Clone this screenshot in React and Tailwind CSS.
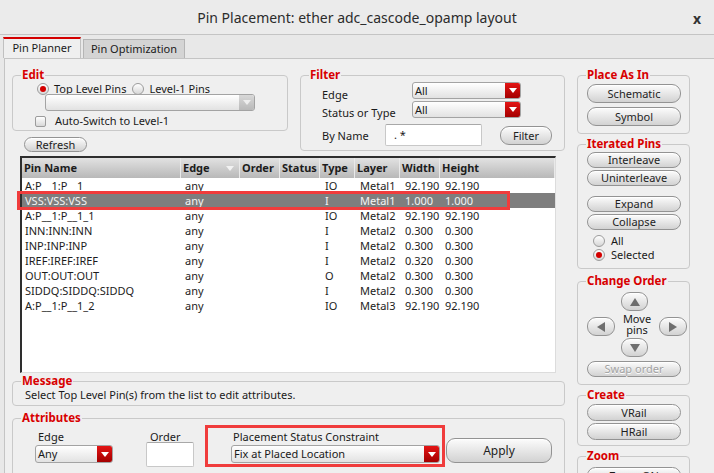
import React from 'react'

const rows = [
  { name: 'A:P__1:P__1', edge: 'any', type: 'IO', layer: 'Metal1', w: '92.190', h: '92.190' },
  { name: 'VSS:VSS:VSS', edge: 'any', type: 'I', layer: 'Metal1', w: '1.000', h: '1.000', sel: true },
  { name: 'A:P__1:P__1_1', edge: 'any', type: 'IO', layer: 'Metal2', w: '92.190', h: '92.190' },
  { name: 'INN:INN:INN', edge: 'any', type: 'I', layer: 'Metal2', w: '0.300', h: '0.300' },
  { name: 'INP:INP:INP', edge: 'any', type: 'I', layer: 'Metal2', w: '0.300', h: '0.300' },
  { name: 'IREF:IREF:IREF', edge: 'any', type: 'I', layer: 'Metal2', w: '0.320', h: '0.300' },
  { name: 'OUT:OUT:OUT', edge: 'any', type: 'O', layer: 'Metal2', w: '0.300', h: '0.300' },
  { name: 'SIDDQ:SIDDQ:SIDDQ', edge: 'any', type: 'I', layer: 'Metal2', w: '0.300', h: '0.300' },
  { name: 'A:P__1:P__1_2', edge: 'any', type: 'IO', layer: 'Metal3', w: '92.190', h: '92.190' },
]

const cols = 'grid grid-cols-[159px_59px_40px_40px_35px_45px_40px_1fr]'

const Group = ({ title, className = '', children }) => (
  <fieldset className={`block shrink-0 border border-[#c9c9c9] rounded-[4px] ${className}`}>
    <legend className="ml-[8px] px-[1px] text-[11.5px] leading-[14px] font-bold text-[#d80000]">{title}</legend>
    {children}
  </fieldset>
)

const Btn = ({ className = '', disabled, children }) => (
  <div
    className={`flex shrink-0 items-center justify-center rounded-[9px] border border-[#939393] bg-linear-to-b from-[#fcfcfc] to-[#d2d2d2] shadow-[inset_0_1px_0_#ffffff] text-[11px] leading-[14px] ${
      disabled ? 'text-[#a2a2a2] [text-shadow:0_1px_0_#ffffff]' : 'text-[#1e1e1e]'
    } ${className}`}
  >
    {children}
  </div>
)

const Radio = ({ checked }) => (
  <span className="w-[12px] h-[12px] rounded-full border border-[#9c9c9c] bg-linear-to-b from-[#ffffff] to-[#d6d6d6] flex items-center justify-center shrink-0">
    {checked && <span className="w-[6px] h-[6px] rounded-full bg-[#d40000]" />}
  </span>
)

const Arrow = ({ color = '#ffffff' }) => (
  <svg width="8" height="5" viewBox="0 0 8 5">
    <polygon points="0,0 8,0 4,5" fill={color} />
  </svg>
)

const Combo = ({ text, className = '', gray }) => (
  <div className={`flex rounded-[3px] border border-[#a3a3a3] bg-linear-to-b from-[#ffffff] to-[#e2e2e2] overflow-hidden ${className}`}>
    <div className="flex-1 flex items-center pl-[2px] text-[11px] leading-[14px] text-[#1a1a1a]">{text}</div>
    <div
      className={`w-[15px] flex items-center justify-center ${
        gray ? 'bg-linear-to-b from-[#d8d8d8] to-[#b9b9b9]' : 'bg-linear-to-b from-[#e41414] to-[#a40000]'
      }`}
    >
      <Arrow color={gray ? '#eeeeee' : '#ffffff'} />
    </div>
  </div>
)

const Tri = ({ dir }) => {
  const pts = { up: '0,8 10,8 5,0', down: '0,0 10,0 5,8', left: '8,0 8,10 0,5', right: '0,0 0,10 8,5' }[dir]
  const vertical = dir === 'up' || dir === 'down'
  return (
    <svg width={vertical ? 10 : 8} height={vertical ? 8 : 10} viewBox={vertical ? '0 0 10 8' : '0 0 8 10'}>
      <polygon points={pts} fill="#6e6e6e" />
    </svg>
  )
}

export default function App() {
  return (
    <div className="w-[714px] h-[473px] overflow-hidden bg-[#e8e8e8] font-['Noto_Sans',sans-serif] text-[11px] text-[#1a1a1a]">
      {/* title bar */}
      <div className="relative h-[35px] flex items-center justify-center border-b border-[#c4c4c4] bg-[#ebebeb]">
        <span className="text-[14px] text-[#2c2c2c]">Pin Placement: ether adc_cascode_opamp layout</span>
        <span className="absolute right-[13px] top-[8px] text-[14px] font-bold text-[#333]">x</span>
      </div>

      {/* tabs */}
      <div className="h-[23px] flex items-end pl-[3px] gap-[2px]">
        <div className="w-[78px] h-[21px] bg-[#efefef] border border-[#c0c0c0] border-b-0 border-t-2 border-t-[#d40000] flex items-center justify-center text-[11px]">
          Pin Planner
        </div>
        <div className="w-[102px] h-[19px] bg-[#d4d4d4] border border-[#b5b5b5] border-b-0 flex items-center justify-center text-[11px]">
          Pin Optimization
        </div>
      </div>

      {/* content */}
      <div className="ml-[4px] h-[415px] overflow-hidden border-l border-t border-[#c4c4c4] bg-[#efefef] flex items-start pl-[7px] pt-[9px] gap-[12px]">
        {/* left column */}
        <div className="w-[553px] shrink-0">
          <div className="flex items-start gap-[12px]">
            <div className="w-[276px] shrink-0">
              <Group title="Edit" className="h-[63px]">
                <div className="flex items-center h-[14px] pl-[24px]">
                  <Radio checked />
                  <span className="ml-[5px]">Top Level Pins</span>
                  <span className="ml-[6px]"><Radio /></span>
                  <span className="ml-[5px]">Level-1 Pins</span>
                </div>
                <Combo text="" gray className="relative ml-[32px] mt-[-2px] w-[210px] h-[17px]" />
                <div className="flex items-center h-[16px] mt-[2px] pl-[22px]">
                  <span className="w-[11px] h-[11px] border border-[#9c9c9c] rounded-[2px] bg-linear-to-b from-[#ffffff] to-[#d8d8d8]" />
                  <span className="ml-[9px]">Auto-Switch to Level-1</span>
                </div>
              </Group>
              <Btn className="ml-[12px] mt-[6px] w-[63px] h-[15px]">Refresh</Btn>
            </div>

            <Group title="Filter" className="w-[265px] h-[83px]">
              <div className="flex items-start h-[17px]">
                <span className="w-[111px] pl-[21px] pt-[6px] leading-[14px]">Edge</span>
                <Combo text="All" className="w-[109px] h-[17px]" />
              </div>
              <div className="flex items-start h-[17px] mt-[2px]">
                <span className="w-[111px] pl-[21px] pt-[5px] leading-[14px]">Status or Type</span>
                <Combo text="All" className="w-[109px] h-[17px]" />
              </div>
              <div className="flex items-start h-[22px] mt-[6px]">
                <span className="w-[84px] pl-[21px] pt-[5px] leading-[14px]">By Name</span>
                <div className="w-[97px] h-[22px] bg-white border border-[#c8c8c8] border-t-[#a8a8a8] rounded-[2px] pl-[8px] pt-[3px] leading-[14px]">. *</div>
                <Btn className="ml-[18px] mt-[2px] w-[52px] h-[19px]">Filter</Btn>
              </div>
            </Group>
          </div>

          {/* table */}
          <div className="relative ml-[8px] mt-[4px] w-[536px] h-[217px] bg-white border-t-2 border-l-2 border-[#2e2e2e] border-r border-b border-r-[#dcdcdc] border-b-[#dcdcdc]">
            <div className={`${cols} h-[20px] bg-linear-to-b from-[#e2e2e2] to-[#b8b8b8] font-bold`}>
              {['Pin Name', 'Edge', 'Order', 'Status', 'Type', 'Layer', 'Width', 'Height'].map((h) => (
                <div key={h} className="flex items-center pl-[2px] border-r border-[#e9e9e9] text-[#1c1c1c]">
                  {h}
                  {h === 'Edge' && (
                    <span className="ml-auto mr-[5px]">
                      <Arrow color="#f2f2f2" />
                    </span>
                  )}
                </div>
              ))}
            </div>
            {rows.map((r) => (
              <div
                key={r.name}
                className={`${cols} h-[15px] leading-[15px] ${r.sel ? 'bg-[#7e7e7e] text-[#f4f4f4]' : 'text-[#1c1c1c]'}`}
              >
                <div className="pl-[3px]">{r.name}</div>
                <div className="pl-[4px]">{r.edge}</div>
                <div />
                <div />
                <div className="pl-[5px]">{r.type}</div>
                <div className="pl-[5px]">{r.layer}</div>
                <div className="pl-[5px]">{r.w}</div>
                <div className="pl-[5px]">{r.h}</div>
              </div>
            ))}
            <div className="absolute left-[-5px] top-[33px] w-[493px] h-[19px] border-[3px] border-[#f03c3c]" />
          </div>

          <Group title="Message" className="mt-[1px] h-[32px]">
            <div className="pl-[12px] leading-[14px]">Select Top Level Pin(s) from the list to edit attributes.</div>
          </Group>

          <Group title="Attributes" className="mt-[5px] h-[70px]">
            <div className="flex items-start">
              <div className="ml-[22px] w-[78px] flex flex-col">
                <span className="pl-[3px] mt-[5px] leading-[14px]">Edge</span>
                <Combo text="Any" className="mt-[1px] h-[18px]" />
              </div>
              <div className="ml-[33px] w-[48px] flex flex-col">
                <span className="pl-[4px] mt-[5px] leading-[14px]">Order</span>
                <div className="mt-[-2px] h-[25px] bg-white border border-[#c8c8c8] border-t-[#a8a8a8] rounded-[2px]" />
              </div>
              <div className="ml-[11px] w-[240px] h-[42px] border-[3px] border-[#f03c3c] pl-[23px] pt-[2px] flex flex-col">
                <span className="pl-[2px] leading-[14px]">Placement Status Constraint</span>
                <Combo text="Fix at Placed Location" className="mt-[1px] w-[209px] h-[18px]" />
              </div>
              <Btn className="ml-[1px] mt-[13px] w-[106px] h-[25px] text-[12px]">Apply</Btn>
            </div>
          </Group>
        </div>

        {/* right column */}
        <div className="w-[113px] shrink-0">
          <Group title="Place As In" className="h-[66px]">
            <Btn className="ml-[9px] mt-[2px] w-[94px] h-[19px]">Schematic</Btn>
            <Btn className="ml-[9px] mt-[4px] w-[94px] h-[19px]">Symbol</Btn>
          </Group>

          <Group title="Iterated Pins" className="mt-[3px] h-[132px]">
            <Btn className="ml-[9px] mt-[1px] w-[94px] h-[16px]">Interleave</Btn>
            <Btn className="ml-[9px] mt-[2px] w-[94px] h-[16px]">Uninterleave</Btn>
            <Btn className="ml-[9px] mt-[10px] w-[94px] h-[16px]">Expand</Btn>
            <Btn className="ml-[9px] mt-[2px] w-[94px] h-[16px]">Collapse</Btn>
            <div className="flex items-center ml-[15px] mt-[4px] h-[14px]">
              <Radio />
              <span className="ml-[6px]">All</span>
            </div>
            <div className="flex items-center ml-[15px] h-[14px]">
              <Radio checked />
              <span className="ml-[6px]">Selected</span>
            </div>
          </Group>

          <Group title="Change Order" className="mt-[5px] h-[111px]">
            <div className="flex justify-center mt-[4px] pl-[2px]">
              <Btn className="w-[27px] h-[19px]"><Tri dir="up" /></Btn>
            </div>
            <div className="flex items-start h-[27px]">
              <Btn className="ml-[9px] mt-[6px] w-[28px] h-[19px]"><Tri dir="left" /></Btn>
              <div className="flex-1 flex flex-col items-center leading-[11px] mt-[2px]">
                <span>Move</span>
                <span>pins</span>
              </div>
              <Btn className="mr-[2px] mt-[6px] w-[28px] h-[19px]"><Tri dir="right" /></Btn>
            </div>
            <div className="flex justify-center pl-[2px]">
              <Btn className="w-[27px] h-[19px]"><Tri dir="down" /></Btn>
            </div>
            <Btn disabled className="ml-[9px] mt-[4px] w-[94px] h-[16px]">Swap order</Btn>
          </Group>

          <Group title="Create" className="mt-[3px] h-[58px]">
            <Btn className="ml-[9px] mt-[2px] w-[94px] h-[17px]">VRail</Btn>
            <Btn className="ml-[9px] mt-[2px] w-[94px] h-[17px]">HRail</Btn>
          </Group>

          <Group title="Zoom" className="mt-[3px] h-[40px]">
            <Btn className="ml-[9px] mt-[4px] w-[94px] h-[17px]">Zoom ON</Btn>
          </Group>
        </div>
      </div>
    </div>
  )
}
